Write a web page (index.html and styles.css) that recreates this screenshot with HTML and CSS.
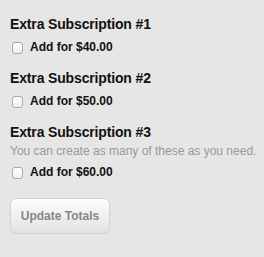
FILE: index.html
```html
<!DOCTYPE html>
<html>
<head>
<meta charset="utf-8">
<link rel="stylesheet" href="styles.css">
</head>
<body>
<form class="form">
  <div class="group">
    <h3 class="title">Extra Subscription #1</h3>
    <label class="option"><input type="checkbox" class="check"><span>Add for $40.00</span></label>
  </div>
  <div class="group">
    <h3 class="title">Extra Subscription #2</h3>
    <label class="option"><input type="checkbox" class="check"><span>Add for $50.00</span></label>
  </div>
  <div class="group">
    <h3 class="title">Extra Subscription #3</h3>
    <p class="desc">You can create as many of these as you need.</p>
    <label class="option"><input type="checkbox" class="check"><span>Add for $60.00</span></label>
  </div>
  <button type="button" class="btn">Update Totals</button>
</form>
</body>
</html>
```
FILE: styles.css
```css
html, body {
  margin: 0;
  padding: 0;
  background: #e6e6e6;
}
body {
  font-family: "Liberation Sans", Arial, sans-serif;
  color: #111;
}
.form {
  padding: 16px 10px 0 10px;
  display: flex;
  flex-direction: column;
  align-items: flex-start;
}
.group {
  margin-bottom: 15px;
}
.title {
  margin: 0 0 6px 0;
  font-size: 14px;
  line-height: 17px;
  font-weight: bold;
  letter-spacing: -0.15px;
}
.desc {
  margin: -4px 0 5px 0;
  font-size: 12px;
  line-height: 16px;
  color: #999;
  white-space: nowrap;
}
.option {
  display: flex;
  align-items: center;
  font-size: 12px;
  font-weight: bold;
  line-height: 16px;
}
.check {
  appearance: none;
  -webkit-appearance: none;
  width: 11px;
  height: 12px;
  margin: 2px 7px 0 2px;
  border: 1px solid #aaa;
  border-radius: 3px;
  background: linear-gradient(#fff, #f0f0f0);
  box-sizing: border-box;
}
.btn {
  margin-top: 3px;
  width: 100px;
  height: 36px;
  border: 1px solid #d2d2d2;
  border-radius: 6px;
  background: linear-gradient(#fdfdfd, #e2e2e2);
  box-shadow: 0 1px 1px rgba(0,0,0,0.08);
  font-family: "Liberation Sans", Arial, sans-serif;
  font-size: 12px;
  font-weight: bold;
  color: #888;
}
```
